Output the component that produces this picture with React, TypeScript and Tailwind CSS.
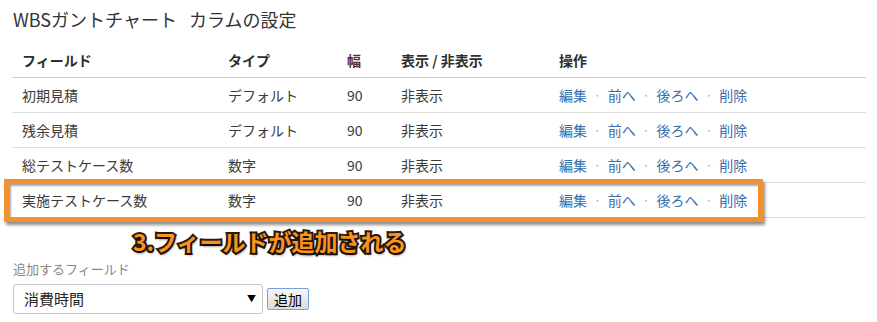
const rows = [
  { name: "初期見積", type: "デフォルト" },
  { name: "残余見積", type: "デフォルト" },
  { name: "総テストケース数", type: "数字" },
  { name: "実施テストケース数", type: "数字" },
];

const actions = ["編集", "前へ", "後ろへ", "削除"];

const App = () => {
  return (
    <div className="relative w-[877px] h-[322px] bg-white text-[#333] font-['Noto_Sans_CJK_JP',sans-serif] overflow-hidden">
      <h1 className="mt-[6px] ml-[13px] text-[18px] leading-[26px] font-normal text-[#333]">
        WBSガントチャート<span className="ml-[12px]">カラムの設定</span>
      </h1>

      <div className="mt-[11px] ml-[12px] w-[854px]">
        <div className="grid grid-cols-[206px_119px_54px_158px_1fr] h-[35px] items-center pl-[10px] border-b border-[#ccc] text-[14px] font-bold text-[#2e2e2e]">
          <span>フィールド</span>
          <span>タイプ</span>
          <span className="text-[#5e2a2a]">幅</span>
          <span>表示 / 非表示</span>
          <span>操作</span>
        </div>
        {rows.map((row) => (
          <div
            key={row.name}
            className="grid grid-cols-[206px_119px_54px_158px_1fr] h-[35px] items-center pl-[10px] border-b border-[#ddd] text-[14px] text-[#3a3a3a]"
          >
            <span>{row.name}</span>
            <span>{row.type}</span>
            <span>90</span>
            <span>非表示</span>
            <span className="flex items-center text-[#3a6ea8]">
              {actions.map((a, i) => (
                <span key={a} className="flex items-center">
                  {i > 0 && <span className="px-[7px] text-[#b0a090] text-[12px]">·</span>}
                  <span>{a}</span>
                </span>
              ))}
            </span>
          </div>
        ))}
      </div>

      <div className="mt-[41px] ml-[13px] text-[13px] leading-[20px] text-[#888]">追加するフィールド</div>

      <div className="mt-[5px] ml-[13px] flex items-center gap-[4px]">
        <div className="w-[250px] h-[30px] flex items-center justify-between pl-[10px] pr-[6px] border border-[#c8c8c8] rounded-[3px] bg-white text-[15px] text-[#222]">
          <span>消費時間</span>
          <span className="text-[9px] text-black">▼</span>
        </div>
        <button className="w-[42px] h-[22px] flex items-center justify-center border border-[#72a3db] rounded-[2px] bg-gradient-to-b from-[#f6f6f6] to-[#dcdcdc] text-[14px] text-black">
          追加
        </button>
      </div>

      <div className="absolute left-[4px] top-[179px] w-[759px] h-[43px] border-[5px] border-[#f39131] shadow-[2px_3px_3px_rgba(0,0,0,0.45),inset_2px_2px_2px_rgba(0,0,0,0.35)]" />

      <div className="absolute left-[133px] top-[226px] text-[23px] leading-[30px] font-bold text-[#f7931e] [-webkit-text-stroke:4px_#2a1a10] [paint-order:stroke_fill] [text-shadow:1px_2px_3px_rgba(0,0,0,0.7)]">
        3.フィールドが追加される
      </div>
    </div>
  );
};

export default App;
